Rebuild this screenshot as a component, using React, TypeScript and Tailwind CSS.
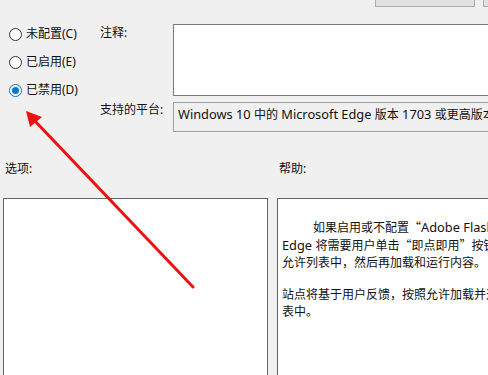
import React from "react";

const font = {
  fontFamily: '"Noto Sans", "Noto Sans CJK SC", sans-serif',
};

function L({ children }: { children: React.ReactNode }) {
  return <span className="text-[12.8px]">{children}</span>;
}

function Q({ children }: { children: React.ReactNode }) {
  return <span style={{ fontFamily: '"Noto Sans CJK SC", sans-serif' }}>{children}</span>;
}

function Radio({ label, checked }: { label: string; checked?: boolean }) {
  return (
    <div className="flex h-[28px] items-center gap-[4px]">
      <span
        className={
          "flex h-[13px] w-[13px] items-center justify-center rounded-full border bg-white " +
          (checked ? "border-[#0078d7]" : "border-[#333333]")
        }
      >
        {checked && <span className="h-[7px] w-[7px] rounded-full bg-[#0078d7]" />}
      </span>
      <span className="text-[12px] leading-[16px] text-[#111]">{label}</span>
    </div>
  );
}

export default function App() {
  return (
    <div
      className="relative h-[375px] w-[488px] overflow-hidden bg-[#f0f0f0] text-[#111]"
      style={font}
    >
      {/* top buttons (clipped) */}
      <div className="flex h-[8px] gap-[8px] pl-[375px]">
        <div className="-mt-[15px] h-[22px] w-[100px] shrink-0 border border-[#adadad] bg-[#e1e1e1]" />
        <div className="-mt-[15px] h-[22px] w-[100px] shrink-0 border border-[#adadad] bg-[#e1e1e1]" />
      </div>

      {/* upper section */}
      <div className="flex">
        <div className="flex w-[100px] shrink-0 flex-col pl-[9px] pt-[12px]">
          <Radio label="未配置(C)" />
          <Radio label="已启用(E)" />
          <Radio label="已禁用(D)" checked />
        </div>
        <div className="flex flex-col pt-[16px]">
          <div className="flex">
            <div className="w-[73px] shrink-0 pt-[1px] text-[12px] leading-[16px]">注释:</div>
            <div className="h-[72px] w-[330px] shrink-0 border border-[#7a7a7a] bg-white" />
          </div>
          <div className="mt-[6px] flex">
            <div className="w-[73px] shrink-0 pt-[0px] text-[12px] leading-[16px]">支持的平台:</div>
            <div className="h-[30px] w-[330px] shrink-0 overflow-hidden whitespace-nowrap border border-[#a0a0a0] bg-[#f0f0f0] pl-[4px] pt-[3px] text-[12px] leading-[16px]">
              <L>Windows 10 </L>中的<L> Microsoft Edge </L>版本<L> 1703 </L>或更高版本
            </div>
          </div>
        </div>
      </div>

      {/* lower section */}
      <div className="mt-[29px] flex gap-[9px] pl-[3px]">
        <div className="flex w-[265px] shrink-0 flex-col">
          <div className="pl-[2px] text-[12px] leading-[16px]">选项:</div>
          <div className="mt-[21px] h-[200px] border border-[#646464] bg-white" />
        </div>
        <div className="flex w-[260px] shrink-0 flex-col">
          <div className="pl-[2px] text-[12px] leading-[16px]">帮助:</div>
          <div className="mt-[21px] h-[200px] overflow-hidden whitespace-nowrap border border-[#646464] bg-white pl-[4px] pt-[19px] text-[12px] leading-[17px]">
            <div className="pl-[31px]">
              如果启用或不配置<Q>“</Q><L>Adobe Flash</L><Q>”</Q>设置，<L>Microsoft</L>
            </div>
            <div>
              <L>Edge </L>将需要用户单击<Q>“</Q>即点即用<Q>”</Q>按钮，以便将站点添加到
            </div>
            <div>允许列表中，然后再加载和运行内容。</div>
            <div className="h-[15px]" />
            <div>站点将基于用户反馈，按照允许加载并运行的方式添加到允许列</div>
            <div>表中。</div>
          </div>
        </div>
      </div>

      {/* red annotation arrow */}
      <svg
        className="pointer-events-none absolute left-0 top-0"
        width="488"
        height="375"
        viewBox="0 0 488 375"
      >
        <line x1="193" y1="287" x2="34" y2="120" stroke="#ee1111" strokeWidth="3" strokeLinecap="round" />
        <polygon points="26,111 42,117 30,127" fill="#ee1111" />
      </svg>
    </div>
  );
}
